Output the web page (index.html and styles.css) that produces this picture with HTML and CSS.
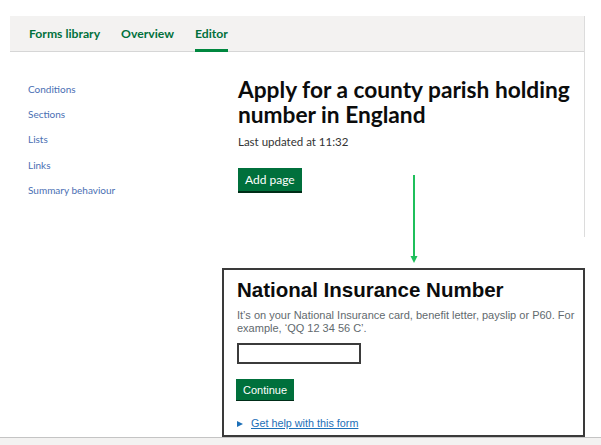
FILE: index.html
```html
<!DOCTYPE html>
<html lang="en">
<head>
<meta charset="utf-8">
<title>Editor</title>
<link rel="stylesheet" href="styles.css">
</head>
<body>
<div class="page">
  <div class="frame">
    <header class="topnav">
      <a class="tab">Forms library</a>
      <a class="tab">Overview</a>
      <a class="tab tab-active">Editor</a>
    </header>
    <div class="layout">
      <ul class="side">
        <li><a>Conditions</a></li>
        <li><a>Sections</a></li>
        <li><a>Lists</a></li>
        <li><a>Links</a></li>
        <li><a>Summary behaviour</a></li>
      </ul>
      <main class="content">
        <h1 class="title">Apply for a county parish holding number in England</h1>
        <p class="updated">Last updated at 11:32</p>
        <button class="btn-add">Add page</button>
      </main>
    </div>
  </div>
  <section class="preview">
    <h2 class="q-title">National Insurance Number</h2>
    <p class="q-hint">It’s on your National Insurance card, benefit letter, payslip or P60. For example, ‘QQ 12 34 56 C’.</p>
    <div class="q-input"></div>
    <button class="btn-continue">Continue</button>
    <p class="help"><span class="tri"></span><a>Get help with this form</a></p>
  </section>
  <svg class="arrow" width="10" height="92" viewBox="0 0 10 92">
    <line x1="5" y1="0" x2="5" y2="84" stroke="#1fbf5b" stroke-width="2"/>
    <polygon points="1.5,81 8.5,81 5,88" fill="#1fbf5b"/>
  </svg>
</div>
<footer class="foot"></footer>
</body>
</html>
```

FILE: styles.css
```css
html, body {
  margin: 0;
  padding: 0;
  background: #ffffff;
}
body {
  font-family: Lato, "Liberation Sans", sans-serif;
  color: #0b0c0c;
  width: 601px;
  height: 445px;
  overflow: hidden;
  display: flex;
  flex-direction: column;
}
.page {
  position: relative;
  padding-top: 16px;
  flex: 0 0 auto;
}
.frame {
  margin-left: 10px;
  width: 574px;
  border-right: 1px solid #dcdcdc;
}
.topnav {
  height: 35px;
  background: #f3f2f1;
  border-bottom: 1px solid #d6d6d6;
  display: flex;
  align-items: stretch;
  padding-left: 19px;
  gap: 21px;
}
.tab {
  font-size: 12.2px;
  font-weight: 700;
  color: #00703c;
  display: flex;
  align-items: center;
  padding-top: 1px;
  border-bottom: 3px solid transparent;
  margin-bottom: -1px;
}
.tab-active {
  border-bottom-color: #00873f;
}
.layout {
  height: 185px;
  display: grid;
  grid-template-columns: 228px 1fr;
}
.side {
  list-style: none;
  margin: 0;
  padding: 30px 0 0 18px;
}
.side li {
  font-size: 10px;
  line-height: 15px;
  margin-bottom: 10.2px;
  color: #4a6fb3;
}
.content {
  padding-top: 25px;
}
.title {
  margin: 0;
  font-size: 22.7px;
  line-height: 25px;
  font-weight: 700;
  width: 345px;
}
.updated {
  margin: 7px 0 0;
  font-size: 11.5px;
  line-height: 16px;
  color: #333333;
}
.btn-add {
  margin-top: 18px;
  font-family: inherit;
  font-size: 12px;
  color: #ffffff;
  background: #00703c;
  border: 0;
  box-shadow: 0 2px 0 #002d18;
  height: 23px;
  padding: 0 7px;
  display: block;
}
.preview {
  margin: 31px 0 0 222px;
  width: 346px;
  height: 165px;
  border: 2px solid #3a3a3a;
  padding: 0 0 0 13px;
  box-sizing: content-box;
  font-family: "Liberation Sans", Arial, sans-serif;
  background: #ffffff;
}
.q-title {
  margin: 9px 0 0;
  font-size: 20.5px;
  line-height: 22px;
  font-weight: 700;
  color: #0b0c0c;
}
.q-hint {
  margin: 8px 0 0;
  font-size: 11px;
  line-height: 13px;
  color: #626a6e;
  width: 346px;
}
.q-input {
  margin-top: 8px;
  width: 120px;
  height: 17px;
  border: 2px solid #3b3b3b;
}
.btn-continue {
  margin-top: 15px;
  margin-left: -1px;
  font-family: inherit;
  font-size: 11px;
  color: #ffffff;
  background: #00703c;
  border: 0;
  box-shadow: 0 1px 0 #002d18;
  height: 21px;
  padding: 0 7px;
  display: block;
}
.help {
  margin: 17px 0 0;
  font-size: 10.8px;
  line-height: 13px;
  display: flex;
  align-items: center;
  gap: 8px;
}
.tri {
  width: 0;
  height: 0;
  border-left: 6px solid #1d70b8;
  border-top: 3.5px solid transparent;
  border-bottom: 3.5px solid transparent;
}
.help a {
  color: #1d70b8;
  text-decoration: underline;
}
.arrow {
  position: absolute;
  left: 409px;
  top: 175px;
}
.foot {
  flex: 1 0 auto;
  background: #f3f2f1;
  border-top: 1px solid #c4c4c4;
}
```
